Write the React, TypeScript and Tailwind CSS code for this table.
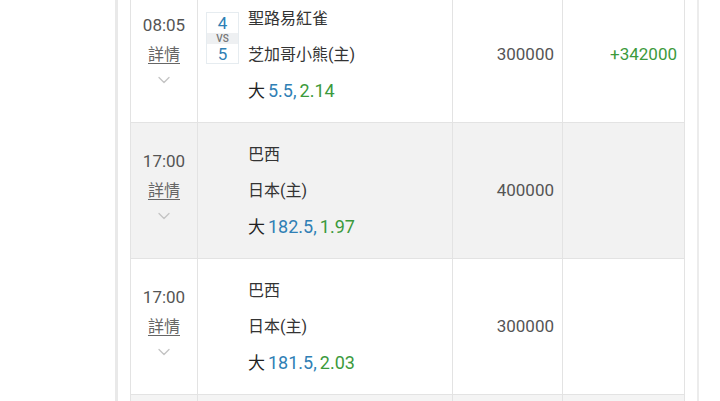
import { ChevronDown } from 'lucide-react'

interface Bet {
  id: string
  time: string
  home: string
  away: string
  score?: [number, number]
  line: string
  odds: string
  amount: string
  profit?: string
  shaded?: boolean
}

const bets: Bet[] = [
  {
    id: 'b1',
    time: '08:05',
    home: '聖路易紅雀',
    away: '芝加哥小熊(主)',
    score: [4, 5],
    line: '5.5',
    odds: '2.14',
    amount: '300000',
    profit: '+342000',
  },
  {
    id: 'b2',
    time: '17:00',
    home: '巴西',
    away: '日本(主)',
    line: '182.5',
    odds: '1.97',
    amount: '400000',
    shaded: true,
  },
  {
    id: 'b3',
    time: '17:00',
    home: '巴西',
    away: '日本(主)',
    line: '181.5',
    odds: '2.03',
    amount: '300000',
  },
]

function ScoreBox({ score }: { score?: [number, number] }) {
  if (!score) return <div className="w-[33px] shrink-0" />
  return (
    <div className="w-[33px] shrink-0 mt-[25px] h-[52px] border border-[#e6ecf0] flex flex-col items-center text-[#2f7fb5]">
      <div className="leading-[20px] text-[17px]">{score[0]}</div>
      <div className="w-full bg-[#eef0f2] text-[#777] text-[10px] leading-[11px] text-center font-medium">VS</div>
      <div className="leading-[20px] text-[17px]">{score[1]}</div>
    </div>
  )
}

function BetRow({ bet }: { bet: Bet }) {
  return (
    <div
      className={`grid grid-cols-[67px_255px_110px_121px] h-[136px] border-b border-[#e3e3e3] ${
        bet.shaded ? 'bg-[#f2f2f2]' : 'bg-white'
      }`}
    >
      {/* time */}
      <div className="border-r border-[#e3e3e3] flex flex-col items-center pt-[23px] text-[#555]">
        <div className="leading-[30px] text-[17px]">{bet.time}</div>
        <div className="leading-[30px] text-[16px] underline underline-offset-[3px] text-[#666]">詳情</div>
        <ChevronDown size={20} strokeWidth={1.6} className="text-[#c4c4c4]" />
      </div>

      {/* teams */}
      <div className="border-r border-[#e3e3e3] flex pl-[8px]">
        <ScoreBox score={bet.score} />
        <div className="pl-[9px] pt-[14px] text-[16px] leading-[36px] text-[#333]">
          <div>{bet.home}</div>
          <div>{bet.away}</div>
          <div className="text-[18px]">
            <span className="text-[#222] text-[17px] mr-[3px]">大</span>
            <span className="text-[#2f7fb5]">{bet.line},</span>
            <span className="text-[#3c9a3c] ml-[3px]">{bet.odds}</span>
          </div>
        </div>
      </div>

      {/* amount */}
      <div className="border-r border-[#e3e3e3] flex items-center justify-end pr-[8px] text-[17px] text-[#555]">
        {bet.amount}
      </div>

      {/* profit */}
      <div className="flex items-center justify-end pr-[7px] text-[17px] text-[#3c9a3c]">
        {bet.profit}
      </div>
    </div>
  )
}

export default function App() {
  return (
    <div
      className="w-[720px] h-[401px] overflow-hidden bg-white flex"
      style={{ fontFamily: "Roboto, 'Noto Sans CJK TC', sans-serif" }}
    >
      <div className="w-[115px] shrink-0" />
      <div className="w-[3px] shrink-0 bg-[#e9e9e9]" />
      <div className="w-[581px] shrink-0 pl-[12px] pr-[12px] border-r-2 border-[#ececec]">
        <div className="-mt-[13px] w-[555px] border-l border-r border-[#e3e3e3]">
          {bets.map((b) => (
            <BetRow key={b.id} bet={b} />
          ))}
          <div className="grid grid-cols-[67px_255px_110px_121px] h-[40px] bg-[#f4f4f4]">
            <div className="border-r border-[#e3e3e3]" />
            <div className="border-r border-[#e3e3e3]" />
            <div className="border-r border-[#e3e3e3]" />
            <div />
          </div>
        </div>
      </div>
    </div>
  )
}
